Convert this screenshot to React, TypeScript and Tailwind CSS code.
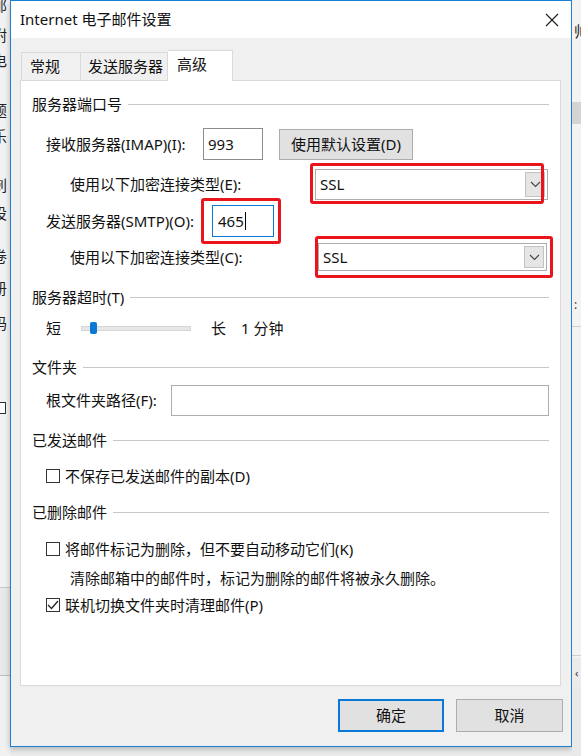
import React from "react";

const font = { fontFamily: '"Noto Sans", "Noto Sans CJK SC", sans-serif' };

const Heading = ({ text, mt }: { text: string; mt: string }) => (
  <div className={`${mt} h-[24px] flex items-center gap-[6px]`}>
    <span className="whitespace-nowrap">{text}</span>
    <div className="flex-1 h-px bg-[#c8c8c8]" />
  </div>
);

const Chevron = () => (
  <svg width="11" height="7" viewBox="0 0 11 7" fill="none">
    <path d="M1 1 L5.5 5.5 L10 1" stroke="#444" strokeWidth="1.1" />
  </svg>
);

const Select = ({ w, h, children }: { w: string; h: string; children?: React.ReactNode }) => (
  <div className={`relative ${w} ${h} border border-[#adadad] bg-white flex items-center`}>
    <span className="pl-[4px] flex-1">SSL</span>
    <div className="mr-[2px] w-[20px] h-[calc(100%-4px)] bg-[#e5e5e5] border border-[#c3c3c3] flex items-center justify-center">
      <Chevron />
    </div>
    {children}
  </div>
);

const Checkbox = ({ checked = false }: { checked?: boolean }) => (
  <div className="w-[14px] h-[14px] border border-[#333] bg-white flex items-center justify-center">
    {checked && (
      <svg width="12" height="10" viewBox="0 0 12 10" fill="none">
        <path d="M1 5 L4.5 8.5 L11 1" stroke="#222" strokeWidth="1.3" />
      </svg>
    )}
  </div>
);

const leftFrags = [
  { t: "邮", y: "mt-[-6px]" },
  { t: "附", y: "mt-[8px]" },
  { t: "电", y: "mt-[3px]" },
  { t: "题", y: "mt-[28px]" },
  { t: "乐", y: "mt-[4px]" },
  { t: "刺", y: "mt-[27px]" },
  { t: "设", y: "mt-[6px]" },
  { t: "卷", y: "mt-[21px]" },
  { t: "册", y: "mt-[10px]" },
  { t: "码", y: "mt-[13px]" },
];

const App = () => {
  return (
    <div className="w-[581px] h-[756px] bg-[#ececec] flex overflow-hidden text-[15px] text-[#111]" style={font}>
      {/* window behind, left side */}
      <div className="w-[10px] h-full flex flex-col overflow-hidden bg-[#f2f2f2]">
        {leftFrags.map((f) => (
          <div key={f.t} className={`${f.y} h-[22px] leading-[22px] ml-[-8px] text-[#222]`}>
            {f.t}
          </div>
        ))}
        <div className="mt-[68px] ml-[-6px] w-[12px] h-[12px] border border-[#333] bg-white" />
        <div className="mt-[173px] h-px bg-[#c9c9c9]" />
        <div className="flex-1 bg-[#e9e9e9]" />
        <div className="h-px bg-[#bdbdbd]" />
        <div className="h-[80px] bg-[#f1f1f1]" />
      </div>

      {/* dialog */}
      <div className="w-[562px] h-[747px] border border-[#1c7fd1] bg-[#f0f0f0] flex flex-col shadow-[0_2px_6px_rgba(0,0,0,0.25)]">
        <div className="h-[37px] bg-white flex items-center pl-[9px] pr-[12px]">
          <span className="flex-1">Internet 电子邮件设置</span>
          <svg width="14" height="14" viewBox="0 0 14 14" fill="none">
            <path d="M1 1 L13 13 M13 1 L1 13" stroke="#222" strokeWidth="1.2" />
          </svg>
        </div>

        <div className="pl-[9px] pr-[10px] pt-[12px] flex flex-col">
          {/* tabs */}
          <div className="h-[30px] flex items-end pl-[1px] relative z-10">
            <div className="w-[60px] h-[28px] border border-b-0 border-[#d9d9d9] bg-[#f0f0f0] flex items-center pl-[8px]">
              常规
            </div>
            <div className="w-[87px] h-[28px] border border-b-0 border-l-0 border-[#d9d9d9] bg-[#f0f0f0] flex items-center pl-[7px]">
              发送服务器
            </div>
            <div className="w-[65px] h-[31px] mb-[-1px] border border-b-0 border-l-0 border-[#d9d9d9] bg-white flex items-center pl-[9px] pb-[3px]">
              高级
            </div>
          </div>

          {/* panel */}
          <div className="h-[606px] bg-white border border-[#d9d9d9] pl-[11px] pr-[11px] flex flex-col">
            <Heading text="服务器端口号" mt="mt-[11px]" />

            <div className="mt-[12px] h-[32px] flex items-center pl-[14px]">
              <span className="w-[157px]">接收服务器(IMAP)(I):</span>
              <div className="w-[60px] h-[32px] border border-[#8c8c8c] bg-white flex items-center pl-[4px]">993</div>
              <div className="ml-[16px] w-[134px] h-[31px] border border-[#adadad] bg-[#e1e1e1] flex items-center justify-center">
                使用默认设置(D)
              </div>
            </div>

            <div className="mt-[8px] h-[32px] flex items-center pl-[38px]">
              <span className="w-[245px]">使用以下加密连接类型(E):</span>
              <Select w="w-[233px]" h="h-[31px]">
                <span className="absolute left-[-6px] top-[-7px] w-[234px] h-[41px] border-[3px] border-[#e8151c] rounded-[3px]" />
              </Select>
            </div>

            <div className="mt-[5px] h-[32px] flex items-center pl-[14px]">
              <span className="w-[166px]">发送服务器(SMTP)(O):</span>
              <div className="relative w-[62px] h-[32px] border border-[#0a78d6] bg-white flex items-center pl-[5px]">
                465
                <span className="ml-[1px] w-px h-[18px] bg-black" />
                <span className="absolute left-[-12px] top-[-8px] w-[80px] h-[46px] border-[3px] border-[#e8151c] rounded-[3px]" />
              </div>
            </div>

            <div className="mt-[6px] h-[28px] flex items-center pl-[38px]">
              <span className="w-[248px]">使用以下加密连接类型(C):</span>
              <Select w="w-[229px]" h="h-[28px]">
                <span className="absolute left-[-4px] top-[-8px] w-[238px] h-[42px] border-[3px] border-[#e8151c] rounded-[3px]" />
              </Select>
            </div>

            <Heading text="服务器超时(T)" mt="mt-[14px]" />

            <div className="mt-[7px] h-[24px] flex items-center pl-[14px]">
              <span className="w-[35px]">短</span>
              <div className="relative w-[110px] h-[5px] bg-[#e7e7e7] border border-[#d6d6d6]">
                <span className="absolute left-[8px] top-[-5px] w-[7px] h-[12px] rounded-[2px] bg-[#0a78d6]" />
              </div>
              <span className="ml-[20px] w-[30px]">长</span>
              <span>1 分钟</span>
            </div>

            <Heading text="文件夹" mt="mt-[15px]" />

            <div className="mt-[6px] h-[31px] flex items-center pl-[14px]">
              <span className="w-[125px]">根文件夹路径(F):</span>
              <div className="flex-1 h-[31px] border border-[#adadad] bg-white" />
            </div>

            <Heading text="已发送邮件" mt="mt-[12px]" />

            <div className="mt-[12px] h-[24px] flex items-center pl-[14px] gap-[5px]">
              <Checkbox />
              <span>不保存已发送邮件的副本(D)</span>
            </div>

            <Heading text="已删除邮件" mt="mt-[12px]" />

            <div className="mt-[13px] h-[24px] flex items-center pl-[14px] gap-[5px]">
              <Checkbox />
              <span>将邮件标记为删除，但不要自动移动它们(K)</span>
            </div>

            <div className="mt-[5px] h-[24px] flex items-center pl-[38px]">
              清除邮箱中的邮件时，标记为删除的邮件将被永久删除。
            </div>

            <div className="mt-[3px] h-[24px] flex items-center pl-[14px] gap-[5px]">
              <Checkbox checked />
              <span>联机切换文件夹时清理邮件(P)</span>
            </div>
          </div>

          {/* buttons */}
          <div className="mt-[13px] h-[33px] flex justify-end gap-[12px] mr-[-2px]">
            <div className="w-[106px] h-[33px] border-2 border-[#0a78d6] bg-[#e1e1e1] flex items-center justify-center">
              确定
            </div>
            <div className="w-[107px] h-[33px] border border-[#adadad] bg-[#e1e1e1] flex items-center justify-center">
              取消
            </div>
          </div>
        </div>
      </div>

      {/* window behind, right side */}
      <div className="w-[9px] h-full flex flex-col overflow-hidden bg-[#f3f3f3]">
        <div className="mt-[20px] h-[22px] leading-[22px] ml-[2px] text-[#222]">帅</div>
        <div className="mt-[60px] h-[22px] bg-[#d4d4d4]" />
        <div className="mt-[170px] h-[22px] leading-[22px] ml-[2px] text-[#333] text-[12px]">:</div>
        <div className="mt-[10px] h-px bg-[#cfcfcf]" />
        <div className="mt-[328px] h-px bg-[#cfcfcf]" />
        <div className="mt-[2px] h-[30px] bg-[#ebebeb] text-[11px] leading-[30px] pl-[3px] text-[#333]">‹</div>
        <div className="flex-1 bg-[#e9e9e9]" />
      </div>
    </div>
  );
};

export default App;
